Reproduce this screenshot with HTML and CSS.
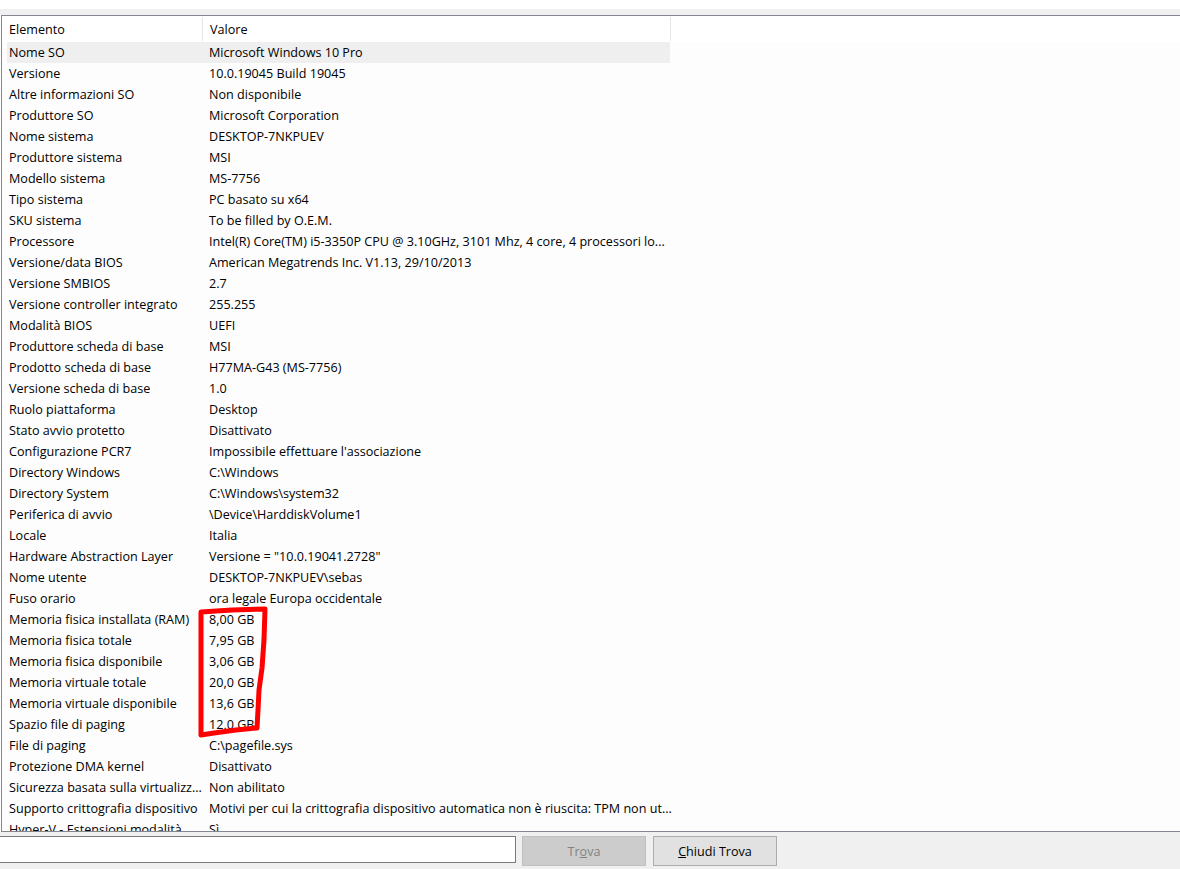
FILE: index.html
```html
<!DOCTYPE html>
<html lang="it">
<head>
    <meta charset="UTF-8">
    <title>Informazioni di sistema</title>
    <link rel="stylesheet" href="styles.css">
</head>
<body>

<div class="top-gap"></div>
<div class="tab-strip"></div>

<div class="list">
    <div class="list-head">
        <div class="head-cell">Elemento</div>
        <div class="head-cell">Valore</div>
    </div>

    <div class="row selected"><span>Nome SO</span><span>Microsoft Windows 10 Pro</span></div>
    <div class="row"><span>Versione</span><span>10.0.19045 Build 19045</span></div>
    <div class="row"><span>Altre informazioni SO</span><span>Non disponibile</span></div>
    <div class="row"><span>Produttore SO</span><span>Microsoft Corporation</span></div>
    <div class="row"><span>Nome sistema</span><span>DESKTOP-7NKPUEV</span></div>
    <div class="row"><span>Produttore sistema</span><span>MSI</span></div>
    <div class="row"><span>Modello sistema</span><span>MS-7756</span></div>
    <div class="row"><span>Tipo sistema</span><span>PC basato su x64</span></div>
    <div class="row"><span>SKU sistema</span><span>To be filled by O.E.M.</span></div>
    <div class="row"><span>Processore</span><span>Intel(R) Core(TM) i5-3350P CPU @ 3.10GHz, 3101 Mhz, 4 core, 4 processori lo...</span></div>
    <div class="row"><span>Versione/data BIOS</span><span>American Megatrends Inc. V1.13, 29/10/2013</span></div>
    <div class="row"><span>Versione SMBIOS</span><span>2.7</span></div>
    <div class="row"><span>Versione controller integrato</span><span>255.255</span></div>
    <div class="row"><span>Modalità BIOS</span><span>UEFI</span></div>
    <div class="row"><span>Produttore scheda di base</span><span>MSI</span></div>
    <div class="row"><span>Prodotto scheda di base</span><span>H77MA-G43 (MS-7756)</span></div>
    <div class="row"><span>Versione scheda di base</span><span>1.0</span></div>
    <div class="row"><span>Ruolo piattaforma</span><span>Desktop</span></div>
    <div class="row"><span>Stato avvio protetto</span><span>Disattivato</span></div>
    <div class="row"><span>Configurazione PCR7</span><span>Impossibile effettuare l'associazione</span></div>
    <div class="row"><span>Directory Windows</span><span>C:\Windows</span></div>
    <div class="row"><span>Directory System</span><span>C:\Windows\system32</span></div>
    <div class="row"><span>Periferica di avvio</span><span>\Device\HarddiskVolume1</span></div>
    <div class="row"><span>Locale</span><span>Italia</span></div>
    <div class="row"><span>Hardware Abstraction Layer</span><span>Versione = "10.0.19041.2728"</span></div>
    <div class="row"><span>Nome utente</span><span>DESKTOP-7NKPUEV\sebas</span></div>
    <div class="row"><span>Fuso orario</span><span>ora legale Europa occidentale</span></div>
    <div class="row"><span>Memoria fisica installata (RAM)</span><span>8,00 GB</span></div>
    <div class="row"><span>Memoria fisica totale</span><span>7,95 GB</span></div>
    <div class="row"><span>Memoria fisica disponibile</span><span>3,06 GB</span></div>
    <div class="row"><span>Memoria virtuale totale</span><span>20,0 GB</span></div>
    <div class="row"><span>Memoria virtuale disponibile</span><span>13,6 GB</span></div>
    <div class="row"><span>Spazio file di paging</span><span>12,0 GB</span></div>
    <div class="row"><span>File di paging</span><span>C:\pagefile.sys</span></div>
    <div class="row"><span>Protezione DMA kernel</span><span>Disattivato</span></div>
    <div class="row"><span>Sicurezza basata sulla virtualizz...</span><span>Non abilitato</span></div>
    <div class="row"><span>Supporto crittografia dispositivo</span><span>Motivi per cui la crittografia dispositivo automatica non è riuscita: TPM non ut...</span></div>
    <div class="row"><span>Hyper-V - Estensioni modalità ...</span><span>Sì</span></div>
</div>

<div class="find-bar">
    <input class="find-input" type="text">
    <button class="btn disabled">Tr<u>o</u>va</button>
    <button class="btn"><u>C</u>hiudi Trova</button>
</div>

<!-- red hand-drawn mark over the memory values -->
<svg class="mark" width="1180" height="869" viewBox="0 0 1180 869">
    <path d="M201 612 L232 610 L265 609 L264 640 L262 668 L259 690 L258 710 L257 728 L236 730 L214 733 L201 735 Z"
          fill="none" stroke="#f00" stroke-width="5" stroke-linejoin="round"/>
</svg>

</body>
</html>
```

FILE: styles.css
```css
* {
    margin: 0;
    padding: 0;
    box-sizing: border-box;
}

body {
    background: #fff;
    color: #000;
    font-family: 'Open Sans', 'Noto Sans', sans-serif;
    font-size: 12.6px;
    width: 1180px;
    height: 869px;
    overflow: hidden;
    position: relative;
}

.top-gap {
    height: 9px;
}

.tab-strip {
    height: 6px;
    background: #f0f0f0;
}

/* list view */
.list {
    height: 817px;
    border-top: 1px solid #828790;
    border-bottom: 1px solid #828790;
    border-left: 1px solid #828790;
    margin-left: 1px;
    background: #fdfdfd;
    overflow: hidden;
}

.list-head {
    display: grid;
    grid-template-columns: 201px 468px;
    height: 26px;
    background: #fff;
}

.head-cell {
    display: flex;
    align-items: center;
    padding-left: 7px;
    border-right: 1px solid #e5e5e5;
    margin: 1px 0;
}

.row {
    display: grid;
    grid-template-columns: 195px 468px;
    width: 663px;
    height: 21px;
    margin-left: 5px;
    align-items: center;
    white-space: nowrap;
}

.row span:first-child {
    padding-left: 2px;
    overflow: hidden;
}

.row span:last-child {
    padding-left: 7px;
    overflow: visible;
}

.row.selected {
    background: #efefef;
}

/* find bar */
.find-bar {
    height: 37px;
    background: #f0f0f0;
    display: flex;
    align-items: flex-start;
    padding-top: 4px;
}

.find-input {
    width: 518px;
    height: 27px;
    margin-left: -2px;
    border: 1px solid #7a7a7a;
    background: #fff;
    outline: none;
}

.btn {
    width: 124px;
    height: 30px;
    margin-left: 6px;
    background: #e1e1e1;
    border: 1px solid #adadad;
    font-family: inherit;
    font-size: 12.6px;
    color: #000;
}

.btn + .btn {
    margin-left: 7px;
}

.btn.disabled {
    background: #cccccc;
    border-color: #bfbfbf;
    color: #838383;
}

.mark {
    position: absolute;
    top: 0;
    left: 0;
    pointer-events: none;
}
```
